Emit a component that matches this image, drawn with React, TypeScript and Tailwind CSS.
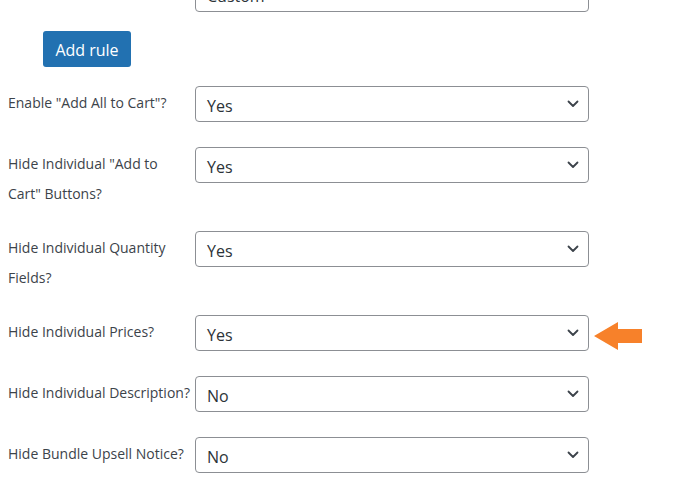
import React from 'react'

interface Row {
  label: React.ReactNode
  value: string
  tall?: boolean
  arrow?: boolean
}

const rows: Row[] = [
  { label: 'Enable "Add All to Cart"?', value: 'Yes' },
  { label: <>Hide Individual "Add to<br />Cart" Buttons?</>, value: 'Yes', tall: true },
  { label: <>Hide Individual Quantity<br />Fields?</>, value: 'Yes', tall: true },
  { label: 'Hide Individual Prices?', value: 'Yes', arrow: true },
  { label: 'Hide Individual Description?', value: 'No' },
  { label: 'Hide Bundle Upsell Notice?', value: 'No' },
]

function Chevron() {
  return (
    <svg width="12" height="8" viewBox="0 0 12 8" fill="none" className="shrink-0">
      <path d="M1.5 1.5 L6 6 L10.5 1.5" stroke="#3c434a" strokeWidth="1.8" strokeLinecap="round" strokeLinejoin="round" />
    </svg>
  )
}

function FakeSelect({ value }: { value: string }) {
  return (
    <div className="w-[394px] h-9 shrink-0 flex items-center justify-between pl-[11px] pr-[9px] border border-[#8c8f94] rounded-[4px] bg-white text-[16px] text-[#2c3338]">
      <span className="pt-[3px]">{value}</span>
      <Chevron />
    </div>
  )
}

export default function App() {
  return (
    <div
      className="w-[696px] h-[491px] overflow-hidden bg-white pl-2"
      style={{ fontFamily: '"Open Sans", "Noto Sans", sans-serif' }}
    >
      {/* top select, scrolled mostly out of view */}
      <div className="flex mt-[-24px]">
        <div className="w-[187px]" />
        <div className="w-[394px] h-9 flex items-center pl-[11px] border border-[#8c8f94] rounded-[4px] text-[16px] text-[#2c3338]">
          <span className="pt-[3px]">Custom</span>
        </div>
      </div>

      <button className="mt-[19px] ml-[35px] w-[88px] h-9 pt-[2px] rounded-[3px] bg-[#2271b1] text-white text-[16px] leading-none">
        Add rule
      </button>

      <div className="mt-[19px] flex flex-col gap-[25px]">
        {rows.map((row, i) => (
          <div key={i} className={`relative flex items-start ${row.tall ? 'h-[59px]' : 'h-9'}`}>
            <div className="w-[187px] shrink-0 pt-[2px] text-[14px] leading-[30px] text-[#3c434a] whitespace-nowrap">
              {row.label}
            </div>
            <FakeSelect value={row.value} />
            {row.arrow && (
              <svg className="absolute left-[586px] top-[7px]" width="48" height="28" viewBox="0 0 48 28">
                <polygon points="0,14 24,0 24,7 48,7 48,21 24,21 24,28" fill="#f7812a" />
              </svg>
            )}
          </div>
        ))}
      </div>
    </div>
  )
}
